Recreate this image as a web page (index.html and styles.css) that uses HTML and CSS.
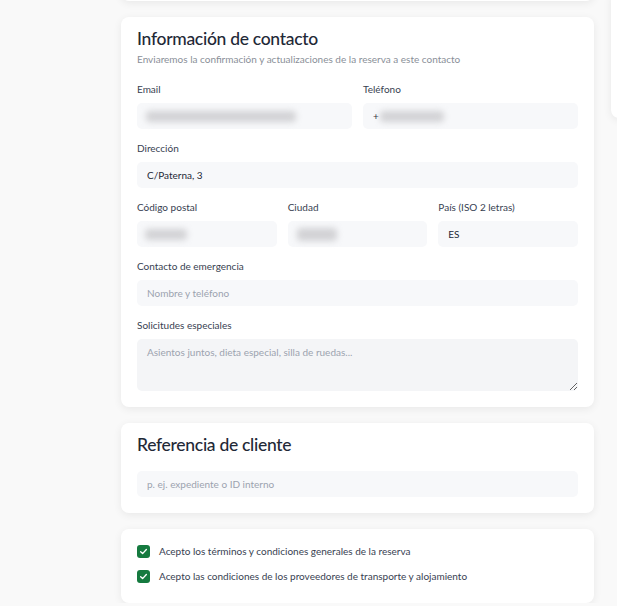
FILE: index.html
```html
<!DOCTYPE html>
<html lang="es">
<head>
  <meta charset="UTF-8" />
  <title>Reserva - Datos de contacto</title>
  <link rel="stylesheet" href="styles.css">
</head>
<body>
  <div class="layout">
    <main class="main">
      <section class="card card-prev"></section>

      <section class="card">
        <h2>Información de contacto</h2>
        <p class="hint">Enviaremos la confirmación y actualizaciones de la reserva a este contacto</p>

        <div class="row cols-2">
          <div class="field">
            <label>Email</label>
            <div class="input"><span class="hidden-data wide"></span></div>
          </div>
          <div class="field">
            <label>Teléfono</label>
            <div class="input"><span class="plus">+</span><span class="hidden-data short"></span></div>
          </div>
        </div>

        <div class="field">
          <label>Dirección</label>
          <input type="text" value="C/Paterna, 3">
        </div>

        <div class="row cols-3">
          <div class="field">
            <label>Código postal</label>
            <div class="input"><span class="hidden-data zip"></span></div>
          </div>
          <div class="field">
            <label>Ciudad</label>
            <div class="input"><span class="hidden-data city"></span></div>
          </div>
          <div class="field">
            <label>País (ISO 2 letras)</label>
            <input type="text" value="ES">
          </div>
        </div>

        <div class="field">
          <label>Contacto de emergencia</label>
          <input type="text" placeholder="Nombre y teléfono">
        </div>

        <div class="field last">
          <label>Solicitudes especiales</label>
          <textarea placeholder="Asientos juntos, dieta especial, silla de ruedas..."></textarea>
        </div>
      </section>

      <section class="card">
        <h2 class="spaced">Referencia de cliente</h2>
        <input type="text" class="ref" placeholder="p. ej. expediente o ID interno">
      </section>

      <section class="card checks">
        <label class="check">
          <span class="box"><svg viewBox="0 0 12 12" width="9" height="9"><path d="M2.2 6.3 4.8 8.8 9.8 3.4" fill="none" stroke="#fff" stroke-width="1.8" stroke-linecap="round" stroke-linejoin="round"/></svg></span>
          Acepto los términos y condiciones generales de la reserva
        </label>
        <label class="check">
          <span class="box"><svg viewBox="0 0 12 12" width="9" height="9"><path d="M2.2 6.3 4.8 8.8 9.8 3.4" fill="none" stroke="#fff" stroke-width="1.8" stroke-linecap="round" stroke-linejoin="round"/></svg></span>
          Acepto las condiciones de los proveedores de transporte y alojamiento
        </label>
      </section>
    </main>

    <aside class="side">
      <div class="card side-card"></div>
    </aside>
  </div>
</body>
</html>
```

FILE: styles.css
```css
body {
  margin: 0;
  font-family: 'Lato', 'Open Sans', sans-serif;
  background-color: #f9f9f9;
  color: #1f2937;
  overflow-x: hidden;
}

.layout {
  display: flex;
  align-items: flex-start;
  gap: 17px;
  padding-left: 121px;
  overflow: hidden;
}

.main {
  width: 473px;
  flex-shrink: 0;
  display: flex;
  flex-direction: column;
  gap: 16px;
}

.card {
  background-color: #fff;
  border-radius: 8px;
  box-shadow: 0 2px 8px rgba(0, 0, 0, 0.07);
  padding: 16px;
  box-sizing: border-box;
}

/* previous step, scrolled mostly out of view */
.card-prev {
  height: 40px;
  margin-top: -39px;
}

.side {
  width: 220px;
  flex-shrink: 0;
}

.side-card {
  height: 128px;
  margin-top: -10px;
}

h2 {
  margin: -5px 0 0;
  font-size: 17.5px;
  line-height: 22px;
  font-weight: 500;
  color: #1f2937;
  letter-spacing: -0.3px;
}

h2.spaced {
  margin-bottom: 15px;
}

.hint {
  margin: 3px 0 17px;
  font-size: 10px;
  line-height: 13px;
  color: #8a8f98;
}

.row {
  display: grid;
  gap: 11px;
}

.cols-2 {
  grid-template-columns: 1fr 1fr;
}

.cols-3 {
  grid-template-columns: 1fr 1fr 1fr;
}

.field {
  display: flex;
  flex-direction: column;
  margin-bottom: 13px;
}

.field.last {
  margin-bottom: 0;
}

.field label {
  font-size: 10px;
  color: #374151;
  margin-bottom: 7px;
  line-height: 13px;
}

input,
textarea,
.input {
  font-family: inherit;
  font-size: 10px;
  color: #1f2937;
  background-color: #f7f8fa;
  border: none;
  border-radius: 5px;
  height: 26px;
  padding: 0 10px;
  box-sizing: border-box;
  width: 100%;
  outline: none;
}

.input {
  display: flex;
  align-items: center;
}

input::placeholder,
textarea::placeholder {
  color: #9ca3af;
}

textarea {
  height: 52px;
  padding: 7px 10px;
  resize: vertical;
  display: block;
  background-color: #f4f5f7;
}

input.ref {
  display: block;
}

/* personal data hidden behind a blur */
.hidden-data {
  display: block;
  height: 11px;
  background-color: #d2d2d5;
  filter: blur(3px);
  border-radius: 4px;
}

.plus {
  font-size: 10px;
  margin-right: 1px;
}

.wide { width: 150px; margin-left: -1px; }
.short { width: 64px; }
.zip { width: 42px; margin-left: -2px; }
.city { width: 40px; height: 13px; margin-left: -1px; }

.checks {
  display: flex;
  flex-direction: column;
  gap: 12px;
  padding: 16px 16px 20px;
}

.check {
  display: flex;
  align-items: center;
  gap: 9px;
  font-size: 10px;
  line-height: 13px;
  color: #374151;
}

.box {
  width: 13px;
  height: 13px;
  border-radius: 3px;
  background-color: #157a3f;
  display: flex;
  align-items: center;
  justify-content: center;
  flex-shrink: 0;
}
```
